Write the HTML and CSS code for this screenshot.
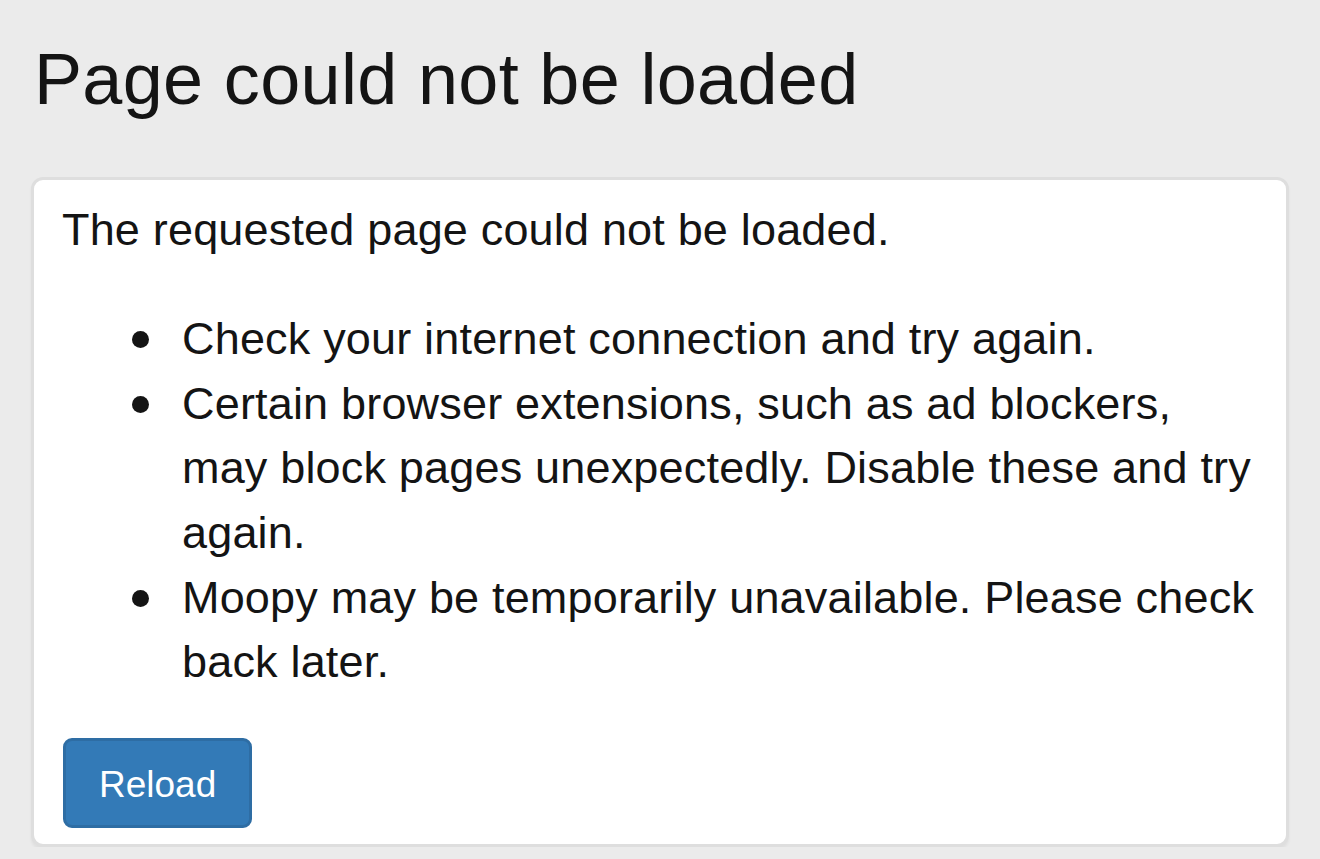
FILE: index.html
```html
<!DOCTYPE html>
<html lang="en">
<head>
<meta charset="utf-8">
<title>Page could not be loaded</title>
<link rel="stylesheet" href="styles.css">
</head>
<body>
<div class="page">
  <h1 class="title">Page could not be loaded</h1>
  <div class="panel">
    <p class="lead">The requested page could not be loaded.</p>
    <ul class="reasons">
      <li>Check your internet connection and try again.</li>
      <li>Certain browser extensions, such as ad blockers, may block pages unexpectedly. Disable these and try again.</li>
      <li>Moopy may be temporarily unavailable. Please check back later.</li>
    </ul>
    <button class="btn" type="button">Reload</button>
  </div>
</div>
</body>
</html>
```
FILE: styles.css
```css
html, body {
  margin: 0;
  padding: 0;
  background: #ebebeb;
}

body {
  font-family: "Liberation Sans", Arial, Helvetica, sans-serif;
  color: #141414;
}

.page {
  padding: 40px 31px 0 31px;
}

.title {
  margin: 0 0 58px 3px;
  font-size: 72px;
  font-weight: 400;
  line-height: 1.1;
  letter-spacing: 0.33px;
  color: #141414;
}

.panel {
  background: #ffffff;
  border: 3px solid #dedede;
  border-radius: 12px;
  box-shadow: 0 3px 3px rgba(0, 0, 0, 0.05);
  padding: 18px 30px 16px 28px;
  font-size: 45px;
  line-height: 64.7px;
  letter-spacing: 0.18px;
}

.lead {
  margin: 0 0 44px 0;
}

.reasons {
  margin: 0 0 43px 0;
  padding: 0 0 0 120px;
  list-style: none;
}

.reasons li {
  position: relative;
}

.reasons li::before {
  content: "";
  position: absolute;
  left: -50px;
  top: 24px;
  width: 17px;
  height: 17px;
  border-radius: 50%;
  background: #141414;
}

.btn {
  display: block;
  margin: 0 0 0 1px;
  padding: 17px 33px 13px 33px;
  font-family: "Liberation Sans", Arial, Helvetica, sans-serif;
  font-size: 37px;
  line-height: 54px;
  letter-spacing: 0;
  color: #ffffff;
  background: #337ab7;
  border: 3px solid #2e6da4;
  border-radius: 9px;
}
```
